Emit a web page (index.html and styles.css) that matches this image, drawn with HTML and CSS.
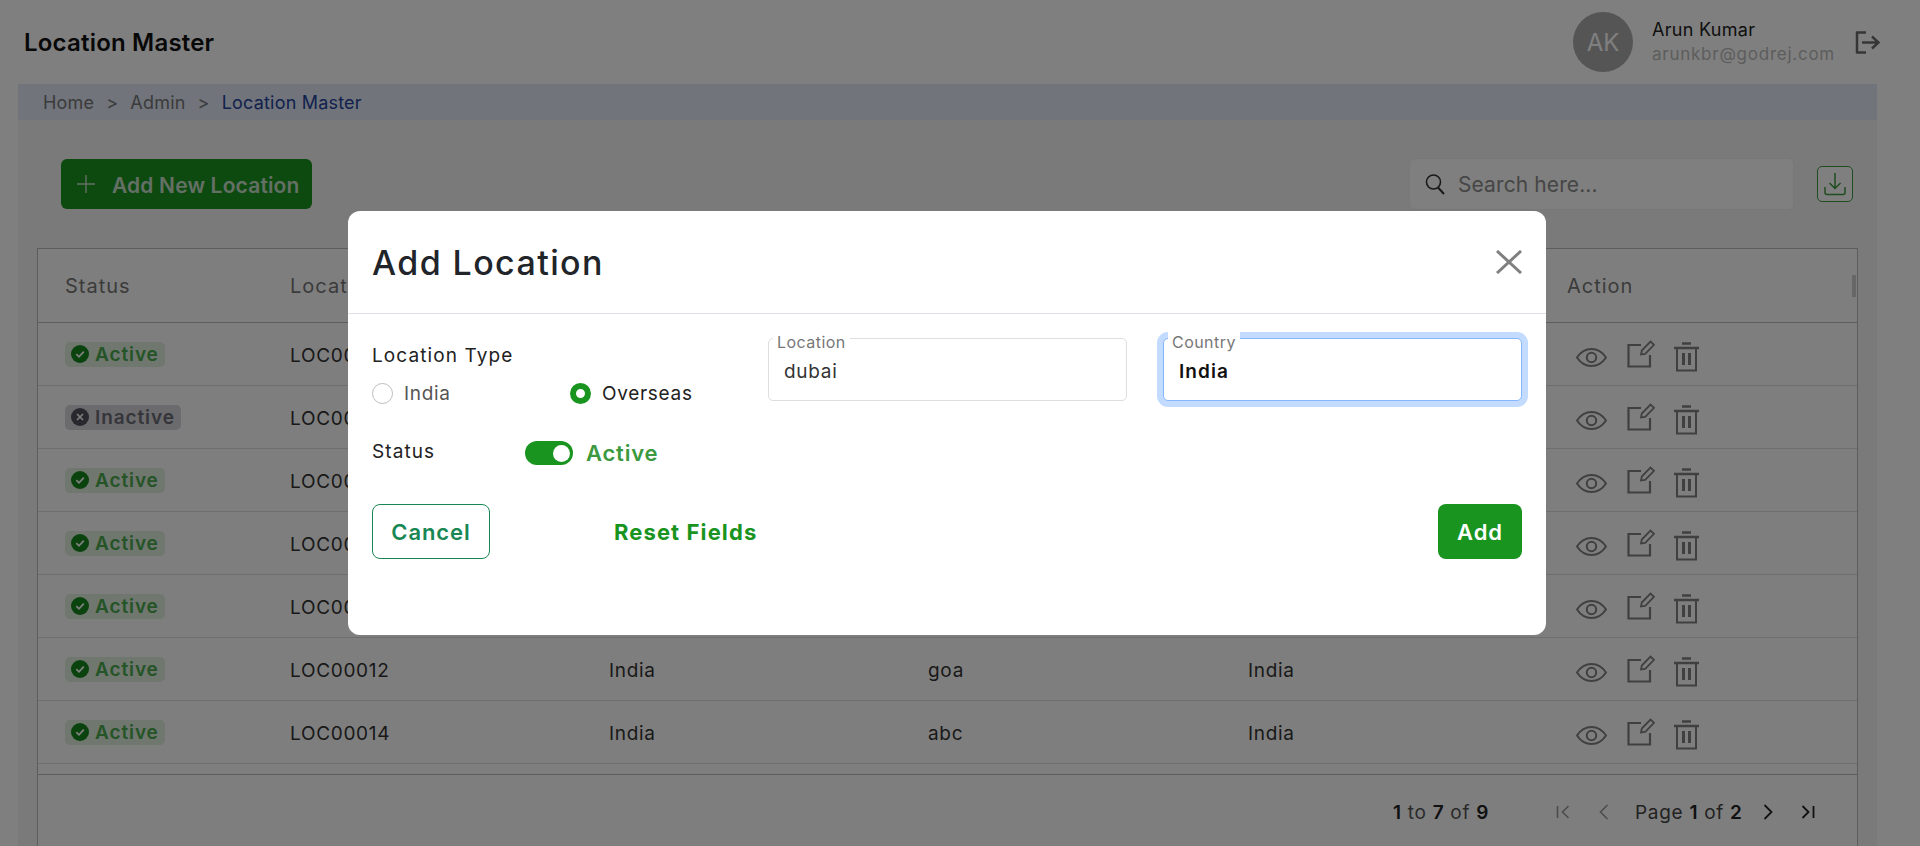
FILE: index.html
```html
<!DOCTYPE html>
<html lang="en">
<head>
<meta charset="utf-8">
<title>Location Master</title>
<link rel="stylesheet" href="styles.css">
</head>
<body>
<svg class="defs" width="0" height="0">
  <symbol id="i-eye" viewBox="0 0 31 19"><path d="M1 9.500C5 3.500 10 1 15.500 1S26 3.500 30 9.500C26 15.500 21 18 15.500 18S5 15.500 1 9.500Z" fill="none" stroke="currentColor" stroke-width="2"/><circle cx="15.500" cy="9.500" r="4.700" fill="none" stroke="currentColor" stroke-width="2"/></symbol>
  <symbol id="i-edit" viewBox="0 0 28 28"><path d="M14 5H1.500V26.500H23V15" fill="none" stroke="currentColor" stroke-width="2.200"/><path d="M14 14.500L14.800 10.500 23.500 1.500 27 4.800 18.200 13.800Z" fill="none" stroke="currentColor" stroke-width="1.800"/></symbol>
  <symbol id="i-trash" viewBox="0 0 25 30"><path d="M8 1.500H17M0 6H25" fill="none" stroke="currentColor" stroke-width="2.500"/><path d="M3 6V28.500H22V6" fill="none" stroke="currentColor" stroke-width="2"/><path d="M9.500 11V23M15.500 11V23" fill="none" stroke="currentColor" stroke-width="3"/></symbol>
  <symbol id="i-check" viewBox="0 0 18 18"><circle cx="9" cy="9" r="9" fill="currentColor"/><path d="M5.300 9.200L8 11.800 12.800 6.600" fill="none" stroke="#fff" stroke-width="1.800"/></symbol>
  <symbol id="i-cross" viewBox="0 0 18 18"><circle cx="9" cy="9" r="9" fill="currentColor"/><path d="M6 6L12 12M12 6L6 12" fill="none" stroke="#fff" stroke-width="1.600"/></symbol>
</svg>

<header class="topbar">
  <h1 class="page-title">Location Master</h1>
  <div class="user">
    <div class="avatar">AK</div>
    <div class="user-text">
      <div class="user-name">Arun Kumar</div>
      <div class="user-mail">arunkbr@godrej.com</div>
    </div>
    <svg class="logout" viewBox="0 0 25 23" width="25" height="23"><path d="M11 1.500H2V21.500H11" fill="none" stroke="currentColor" stroke-width="2.500" stroke-linejoin="round"/><path d="M7 11.500H23M17 5.500L23.500 11.500 17 17.500" fill="none" stroke="currentColor" stroke-width="2.500"/></svg>
  </div>
</header>

<main class="main">
  <nav class="crumbs">
    <span>Home</span><span class="sep">&gt;</span><span>Admin</span><span class="sep">&gt;</span><span class="crumb-now">Location Master</span>
  </nav>

  <section class="toolbar">
    <button class="add-new">
      <svg class="plus" viewBox="0 0 18 18" width="18" height="18"><path d="M9 0V18M0 9H18" stroke="currentColor" stroke-width="1.400" fill="none"/></svg>
      <span>Add New Location</span>
    </button>
    <div class="search">
      <svg viewBox="0 0 20 22" width="20" height="22"><circle cx="8.500" cy="9" r="7" fill="none" stroke="currentColor" stroke-width="1.600"/><path d="M13 14.500L19 21" stroke="currentColor" stroke-width="2" fill="none"/></svg>
      <span>Search here...</span>
    </div>
    <button class="download">
      <svg viewBox="0 0 24 26" width="24" height="26"><path d="M12 2V17M6.500 12L12 17.500 17.500 12" fill="none" stroke="currentColor" stroke-width="1.500"/><path d="M2 16V21.500Q2 23.500 4 23.500H20Q22 23.500 22 21.500V16" fill="none" stroke="currentColor" stroke-width="1.500"/></svg>
    </button>
  </section>

  <section class="table">
    <div class="row head">
      <div>Status</div><div>Location ID</div><div>Location Type</div><div>Location</div><div>Country</div><div>Action</div>
      <span class="grip"></span>
    </div>
    <div class="row">
      <div><span class="badge on"><svg width="18" height="18"><use href="#i-check"/></svg>Active</span></div>
      <div>LOC00001</div><div>India</div><div>mumbai</div><div>India</div>
      <div class="acts"><svg class="a-eye"><use href="#i-eye"/></svg><svg class="a-edit"><use href="#i-edit"/></svg><svg class="a-trash"><use href="#i-trash"/></svg></div>
    </div>
    <div class="row">
      <div><span class="badge off"><svg width="18" height="18"><use href="#i-cross"/></svg>Inactive</span></div>
      <div>LOC00002</div><div>India</div><div>pune</div><div>India</div>
      <div class="acts"><svg class="a-eye"><use href="#i-eye"/></svg><svg class="a-edit"><use href="#i-edit"/></svg><svg class="a-trash"><use href="#i-trash"/></svg></div>
    </div>
    <div class="row">
      <div><span class="badge on"><svg width="18" height="18"><use href="#i-check"/></svg>Active</span></div>
      <div>LOC00005</div><div>India</div><div>delhi</div><div>India</div>
      <div class="acts"><svg class="a-eye"><use href="#i-eye"/></svg><svg class="a-edit"><use href="#i-edit"/></svg><svg class="a-trash"><use href="#i-trash"/></svg></div>
    </div>
    <div class="row">
      <div><span class="badge on"><svg width="18" height="18"><use href="#i-check"/></svg>Active</span></div>
      <div>LOC00008</div><div>India</div><div>chennai</div><div>India</div>
      <div class="acts"><svg class="a-eye"><use href="#i-eye"/></svg><svg class="a-edit"><use href="#i-edit"/></svg><svg class="a-trash"><use href="#i-trash"/></svg></div>
    </div>
    <div class="row">
      <div><span class="badge on"><svg width="18" height="18"><use href="#i-check"/></svg>Active</span></div>
      <div>LOC00010</div><div>India</div><div>kolkata</div><div>India</div>
      <div class="acts"><svg class="a-eye"><use href="#i-eye"/></svg><svg class="a-edit"><use href="#i-edit"/></svg><svg class="a-trash"><use href="#i-trash"/></svg></div>
    </div>
    <div class="row">
      <div><span class="badge on"><svg width="18" height="18"><use href="#i-check"/></svg>Active</span></div>
      <div>LOC00012</div><div>India</div><div>goa</div><div>India</div>
      <div class="acts"><svg class="a-eye"><use href="#i-eye"/></svg><svg class="a-edit"><use href="#i-edit"/></svg><svg class="a-trash"><use href="#i-trash"/></svg></div>
    </div>
    <div class="row">
      <div><span class="badge on"><svg width="18" height="18"><use href="#i-check"/></svg>Active</span></div>
      <div>LOC00014</div><div>India</div><div>abc</div><div>India</div>
      <div class="acts"><svg class="a-eye"><use href="#i-eye"/></svg><svg class="a-edit"><use href="#i-edit"/></svg><svg class="a-trash"><use href="#i-trash"/></svg></div>
    </div>
    <div class="table-gap"></div>
    <footer class="pager">
      <span class="count"><b>1</b> to <b>7</b> of <b>9</b></span>
      <svg class="pg pg-first" viewBox="0 0 14 14" width="14" height="14"><path d="M1.500 1V13M12.500 1L6.500 7 12.500 13" fill="none" stroke="currentColor" stroke-width="1.600"/></svg>
      <svg class="pg pg-prev" viewBox="0 0 10 16" width="10" height="16"><path d="M8.500 1L1.500 8 8.500 15" fill="none" stroke="currentColor" stroke-width="1.600"/></svg>
      <span class="page-of">Page <b>1</b> of <b>2</b></span>
      <svg class="pg pg-next" viewBox="0 0 10 16" width="10" height="16"><path d="M1.500 1L8.500 8 1.500 15" fill="none" stroke="currentColor" stroke-width="1.800"/></svg>
      <svg class="pg pg-last" viewBox="0 0 14 14" width="14" height="14"><path d="M1.500 1L7.500 7 1.500 13M12.500 1V13" fill="none" stroke="currentColor" stroke-width="1.800"/></svg>
    </footer>
  </section>
</main>

<div class="overlay">
  <div class="modal">
    <div class="modal-head">
      <h2 class="modal-title">Add Location</h2>
      <svg class="close" viewBox="0 0 26 24" width="26" height="24"><path d="M1 1L25 23M25 1L1 23" stroke="currentColor" stroke-width="3" fill="none"/></svg>
    </div>
    <div class="modal-body">
      <div class="form-top">
        <div class="type-col">
          <div class="form-label">Location Type</div>
          <div class="radios">
            <label class="radio"><span class="dot"></span>India</label>
            <label class="radio dark"><span class="dot sel"></span>Overseas</label>
          </div>
        </div>
        <div class="field">
          <span class="float">Location</span>
          <input class="input" value="dubai">
        </div>
        <div class="field focus">
          <span class="float">Country</span>
          <input class="input strong" value="India">
        </div>
      </div>
      <div class="status-row">
        <div class="form-label status-label">Status</div>
        <span class="toggle"><span class="knob"></span></span>
        <span class="toggle-text">Active</span>
      </div>
      <div class="actions">
        <button class="btn-cancel">Cancel</button>
        <button class="btn-reset">Reset Fields</button>
        <button class="btn-add">Add</button>
      </div>
    </div>
  </div>
</div>
</body>
</html>
```
FILE: styles.css
```css
* { box-sizing: border-box; }
html, body { margin: 0; height: 846px; overflow: hidden; }
body { font-family: Inter, "Liberation Sans", sans-serif; background: #fff; color: #333; font-size: 19px; letter-spacing: .7px; }
.defs { position: absolute; }
button { font-family: inherit; }

.topbar { height: 84px; display: flex; align-items: center; justify-content: space-between; padding: 0 40px 0 24px; letter-spacing: 0; }
.page-title { margin: 0; font-size: 24px; font-weight: 600; color: #111; letter-spacing: .2px; }
.user { display: flex; align-items: center; }
.avatar { width: 60px; height: 60px; border-radius: 50%; background: #aaa; color: #fff; display: flex; align-items: center; justify-content: center; font-size: 24px; margin-right: 19px; }
.user-text { width: 203px; }
.user-name { font-size: 18px; color: #222; line-height: 24px; letter-spacing: .3px; }
.user-mail { font-size: 17px; color: #bbb; line-height: 24px; letter-spacing: .75px; }
.logout { color: #6c6c6c; }

.main { margin: 0 43px 0 18px; padding: 0 19px; background: #f4f4f4; height: 762px; overflow: hidden; }
.crumbs { height: 36px; margin: 0 -19px; padding-left: 25px; background: #e2e8f6; display: flex; align-items: center; font-size: 18px; letter-spacing: .2px; color: #777; }
.sep { margin: 0 12px; }
.crumb-now { color: #24439a; }

.toolbar { height: 128px; display: flex; align-items: center; padding: 0 5px 0 24px; letter-spacing: 0; }
.add-new { width: 251px; height: 50px; border: 0; border-radius: 6px; background: #19941f; color: #c9dfca; font-size: 21px; letter-spacing: .15px; font-weight: 600; display: flex; align-items: center; padding: 2px 0 0 16px; gap: 17px; margin-right: auto; white-space: nowrap; }
.plus { flex: none; margin-top: -2px; }
.search { width: 385px; height: 52px; margin-right: -1px; border: 1px solid #f0f0f0; border-radius: 6px; background: #fff; display: flex; align-items: center; padding-left: 15px; gap: 13px; font-size: 21px; letter-spacing: .1px; color: #8c8c8c; }
.search svg { color: #333; }
.download { width: 36px; height: 36px; margin-left: 24px; border: 1px solid #3f9a3f; border-radius: 5px; background: #fff; color: #3f9a3f; padding: 0; display: flex; align-items: center; justify-content: center; }

.table { border: 1px solid #bbb; background: #fdfdfd; height: 620px; }
.row { display: grid; grid-template-columns: 225px 319px 319px 320px 319px 1fr; padding: 2px 0 0 27px; height: 63px; align-items: center; border-bottom: 1px solid #ddd; position: relative; white-space: nowrap; }
.head { height: 74px; padding-top: 0; color: #777; border-bottom-color: #bbb; font-size: 20px; letter-spacing: 1px; }
.grip { position: absolute; right: 1px; top: 26px; width: 4px; height: 22px; background: #cfcfcf; }
.table-gap { height: 11px; border-bottom: 1px solid #bbb; }

.badge { display: inline-flex; align-items: center; height: 25px; padding: 0 6px; gap: 6px; border-radius: 5px; font-weight: 600; letter-spacing: .9px; }
.badge.on { background: #dfeedf; color: #4aa84d; }
.badge.on svg { color: #14861a; }
.badge.off { background: #d6d6dd; color: #6a6a74; }
.badge.off svg { color: #50505c; }

.acts { display: flex; align-items: center; padding: 4px 0 0 9px; color: #808080; }
.a-eye { width: 31px; height: 19px; margin-right: 20px; }
.a-edit { width: 28px; height: 28px; margin-top: -6px; margin-right: 19px; }
.a-trash { width: 25px; height: 30px; margin-top: -1px; }

.pager { height: 74px; display: flex; align-items: center; padding-left: 1355px; color: #444; white-space: nowrap; }
.pager b { font-weight: 600; color: #222; }
.count { width: 163px; color: #555; }
.pg { color: #999; flex: none; }
.pg-first { margin-right: 29px; }
.pg-prev { margin-right: 26px; }
.page-of { width: 128px; }
.pg-next { color: #222; margin-right: 28px; }
.pg-last { color: #222; }

.overlay { position: fixed; inset: 0; background: rgba(0, 0, 0, .5); }
.modal { width: 1198px; height: 424px; margin: 211px 0 0 348px; background: #fff; border-radius: 12px; }
.modal-head { height: 103px; padding: 0 24px; display: flex; align-items: center; justify-content: space-between; border-bottom: 1px solid #dee2e6; }
.modal-title { margin: 0; font-size: 34px; font-weight: 500; color: #212529; letter-spacing: 1.4px; }
.close { color: #808080; }
.modal-body { padding: 24px; }
.form-top { display: grid; grid-template-columns: 360px 359px 359px; gap: 36px; height: 63px; }
.form-label { font-size: 19px; color: #222; letter-spacing: 1.1px; }
.type-col { padding-top: 6px; }
.radios { display: flex; margin-top: 15px; }
.radio { flex: none; width: 198px; display: flex; align-items: center; gap: 11px; color: #555; }
.radio.dark { color: #222; }
.dot { width: 21px; height: 21px; border-radius: 50%; border: 1px solid #bdbdbd; flex: none; }
.dot.sel { border: 6px solid #19941f; }
.field { position: relative; height: 63px; }
.float { position: absolute; left: 5px; top: -6px; padding: 0 4px; background: #fff; font-size: 16px; letter-spacing: .45px; line-height: 20px; color: #777; z-index: 1; }
.input { width: 100%; height: 100%; border: 1px solid #dedede; border-radius: 5px; padding: 4px 15px 0; font: inherit; letter-spacing: .7px; color: #333; background: #fff; outline: 0; }
.focus .input { border-color: #86b7fe; box-shadow: 0 0 0 6px #c2dbfe; }
.input.strong { font-weight: 600; color: #111; letter-spacing: 1.1px; }
.status-row { display: flex; align-items: center; margin-top: 40px; height: 24px; }
.status-label { width: 153px; margin-top: -4px; }
.toggle { width: 48px; height: 24px; border-radius: 12px; background: #19941f; display: flex; align-items: center; justify-content: flex-end; padding-right: 3px; }
.knob { width: 17px; height: 17px; border-radius: 50%; background: #fff; }
.toggle-text { margin-left: 13px; font-size: 22px; letter-spacing: .8px; font-weight: 600; color: #3b9a3f; }
.actions { display: flex; align-items: center; margin-top: 39px; }
.btn-cancel { width: 118px; height: 55px; border: 1px solid #198754; border-radius: 8px; background: #fff; color: #198754; font-size: 22px; letter-spacing: .9px; font-weight: 600; }
.btn-reset { border: 0; background: none; padding: 0; margin-left: 124px; color: #19941f; font-size: 22px; letter-spacing: 1.1px; font-weight: 700; }
.btn-add { width: 84px; height: 55px; margin-left: auto; border: 0; border-radius: 8px; background: #19941f; color: #fff; font-size: 22px; letter-spacing: .9px; font-weight: 600; }
```
